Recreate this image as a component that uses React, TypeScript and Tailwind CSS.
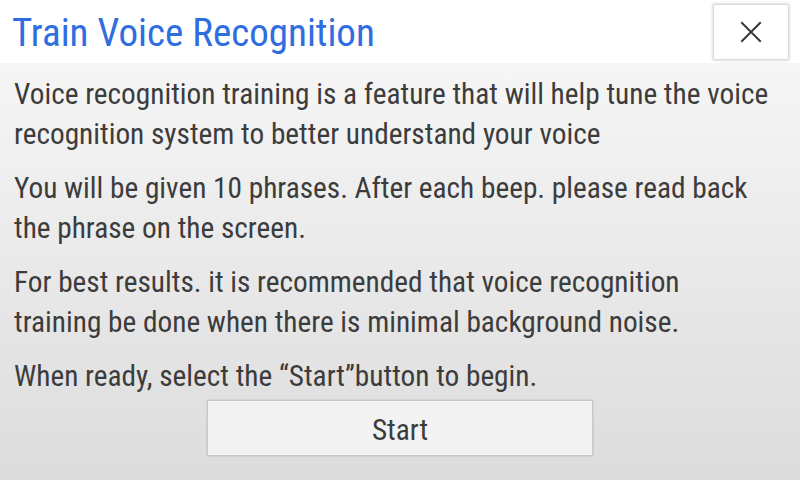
const paragraphs = [
  'Voice recognition training is a feature that will help tune the voice\nrecognition system to better understand your voice',
  'You will be given 10 phrases. After each beep. please read back\nthe phrase on the screen.',
  'For best results. it is recommended that voice recognition\ntraining be done when there is minimal background noise.',
  'When ready, select the \u201cStart\u201dbutton to begin.',
];

function CloseIcon() {
  return (
    <svg width="22" height="22" viewBox="0 0 22 22" fill="none" stroke="#3a3a3a" strokeWidth="2" strokeLinecap="square">
      <path d="M2 2 L20 20 M20 2 L2 20" />
    </svg>
  );
}

export default function App() {
  return (
    <div className="w-[800px] h-[480px] flex flex-col overflow-hidden font-['Roboto_Condensed','Noto_Sans',sans-serif]">
      <div className="h-[63px] bg-white flex items-center justify-between pl-[12px] pr-[11px] shrink-0">
        <h1 className="text-[39px] leading-none text-[#2f6de1] mt-[3px]">Train Voice Recognition</h1>
        <button
          aria-label="Close"
          className="w-[76px] h-[56px] bg-white border border-[#dadada] shadow-[0_0_3px_rgba(0,0,0,0.22)] flex items-center justify-center"
        >
          <CloseIcon />
        </button>
      </div>
      <div className="flex-1 bg-gradient-to-b from-[#f6f6f6] to-[#dcdcdc] px-[14px] pt-[11px] flex flex-col">
        <div className="flex flex-col gap-[14px] text-[29.3px] leading-[40px] text-[#3c3c3c]">
          {paragraphs.map((p) => (
            <p key={p} className="whitespace-pre-line">{p}</p>
          ))}
        </div>
        <div className="flex justify-center mt-[4px]">
          <button className="w-[386px] h-[56px] bg-[#f3f3f3] border border-[#c8c8c8] shadow-[0_0_2px_rgba(0,0,0,0.15)] text-[29.3px] leading-none text-[#3c3c3c] flex items-center justify-center pt-[5px]">
            Start
          </button>
        </div>
      </div>
    </div>
  );
}
